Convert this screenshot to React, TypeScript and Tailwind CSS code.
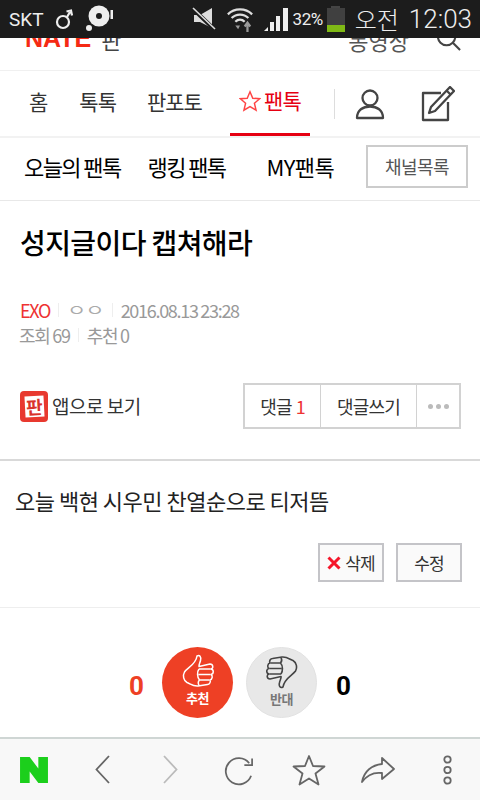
const KR = "font-['Noto_Sans_CJK_KR','Noto_Sans',sans-serif]";

const ThumbPath = () => (
  <>
    <path d="M15 1.5 C17.5 0 19.5 2 18.5 6 C18 8.5 16.5 10.5 17 12 L28 9.5 C31.5 9.5 31.5 14 29 14.5 C32 15 32 19.5 29 20 C31 21 30.5 25 28 25.5 C29 27.5 27.5 30 25.5 30 L16 31.5 C11 32 8 29 5 28 C1.5 26 0.5 21 2.5 17.5 C5 13.5 14 10 15 1.5 Z" />
    <path d="M17 14.5 L28.5 14.5 M16.5 20 L28.5 20 M17.5 25.5 L27.5 25.5 M17 14.5 C15 17 15 23 17.5 25.5 C16 27 16 29 17 31" />
  </>
);

const StatusBar = () => (
  <div className="h-[38px] shrink-0 bg-[#1c1c1c] flex items-center text-[#eeeeee] relative">
    <span className="ml-[9px] text-[19px] font-['Roboto',sans-serif] leading-none">SKT</span>
    {/* gender */}
    <svg width="20" height="22" viewBox="0 0 20 22" className="ml-[11px]" fill="none" stroke="#eee" strokeWidth="2.2">
      <circle cx="8" cy="14" r="6" />
      <path d="M12 9 L15 4 M11.5 3.5 L16 2.5 L17 7.5" />
    </svg>
    {/* disc */}
    <svg width="28" height="28" viewBox="0 0 28 28" className="ml-[11px]">
      <circle cx="13" cy="11" r="10.5" fill="#eee" />
      <circle cx="13" cy="11" r="3" fill="#1c1c1c" />
      <circle cx="3" cy="23" r="3" fill="#eee" />
      <rect x="24.5" y="5" width="2.5" height="9" fill="#eee" />
    </svg>
    <div className="ml-auto flex items-center">
      {/* mute */}
      <svg width="24" height="24" viewBox="0 0 24 24" className="mr-[10px]">
        <path d="M2 8 H8 L20 1 V21 L8 15 H2 Z" fill="#ddd" />
        <path d="M1 2 L22 22" stroke="#1c1c1c" strokeWidth="4" />
        <path d="M1 1 L23 22" stroke="#ddd" strokeWidth="1.6" />
      </svg>
      {/* wifi */}
      <svg width="28" height="28" viewBox="0 0 30 28" className="mr-[10px]" fill="none" stroke="#ddd" strokeWidth="2.4">
        <path d="M2 9 C9 2 21 2 28 9" />
        <path d="M6 13 C11 8 19 8 24 13" />
        <path d="M10 17 C13 14 17 14 20 17" />
        <path d="M10 21 L13 25 L15 21 Z" fill="#999" stroke="none" />
        <path d="M20 22 L23 18 L26 22 M23 19 V28" stroke="#999" />
      </svg>
      {/* signal */}
      <svg width="25" height="25" viewBox="0 0 25 25" className="mr-[4px]" fill="#eee">
        <path d="M0 24 L4 20 V24 Z" />
        <rect x="6" y="15" width="4" height="9" />
        <rect x="12" y="9" width="4" height="15" />
        <rect x="19" y="1" width="5" height="23" />
      </svg>
      <span className="text-[17px] font-['Roboto',sans-serif] leading-none tracking-[-0.5px] mr-[4px]">32%</span>
      {/* battery */}
      <div className="w-[18px] h-[26px] mr-[10px] flex flex-col items-center">
        <div className="w-[9px] h-[2px] bg-[#444]" />
        <div className="w-[18px] h-[24px] bg-[#404040] flex flex-col justify-end">
          <div className="h-[7px] bg-[#7fb915]" />
        </div>
      </div>
      <span className={`${KR} text-[24px] leading-none font-light mr-[10px]`}>오전</span>
      <span className="text-[26px] font-['Roboto',sans-serif] font-light leading-none mr-[8px]">12:03</span>
    </div>
  </div>
);

const ClippedHeader = () => (
  <div className="h-[32px] shrink-0 overflow-hidden border-b border-[#f0f0f0] box-content">
    <div className="flex items-start h-[32px] pl-[25px] pr-[19px]">
      <span className="-mt-[12px] text-[#f52a14] font-['Liberation_Sans',sans-serif] font-bold text-[25px] leading-none">NATE</span>
      <span className={`${KR} -mt-[10px] ml-[10px] text-[#444] text-[22px] leading-none`}>판</span>
      <span className={`${KR} -mt-[9px] ml-auto mr-[27px] text-[#555] text-[22px] leading-none`}>동영상</span>
      <svg width="25" height="25" viewBox="0 0 26 26" fill="none" stroke="#444" strokeWidth="2.2" className="-mt-[12px]">
        <circle cx="11" cy="11" r="9" />
        <path d="M17.5 17.5 L25 25" />
      </svg>
    </div>
  </div>
);

const TabBar = () => (
  <div className={`${KR} h-[65px] shrink-0 flex items-stretch border-b-2 border-[#f2f2f2] text-[#333] text-[21px] tracking-[-1px] box-content`}>
    <div className="ml-[29px] flex items-center pb-[3px]">홈</div>
    <div className="ml-[32px] flex items-center pb-[3px]">톡톡</div>
    <div className="ml-[31px] flex items-center pb-[3px]">판포토</div>
    <div className="ml-[28px] w-[80px] flex items-center justify-center gap-[3px] pb-[3px] border-b-[3px] border-[#e60012] text-[#e60012] relative">
      <svg width="22" height="22" viewBox="0 0 24 24" fill="none" stroke="#f44" strokeWidth="1.6">
        <path d="M12 2 L15 9 L22.5 9.5 L16.8 14.5 L18.6 22 L12 18 L5.4 22 L7.2 14.5 L1.5 9.5 L9 9 Z" />
      </svg>
      <span>팬톡</span>
    </div>
    <div className="ml-[24px] w-px h-[30px] self-center bg-[#ddd]" />
    <div className="ml-[20px] flex items-center">
      <svg width="30" height="32" viewBox="0 0 30 32" fill="none" stroke="#444" strokeWidth="2.3">
        <circle cx="15" cy="10" r="7.5" />
        <path d="M2 30 C2 22 8 18.5 15 18.5 C22 18.5 28 22 28 30 Z" strokeLinejoin="round" />
      </svg>
    </div>
    <div className="ml-[36px] flex items-center">
      <svg width="34" height="36" viewBox="0 0 34 36" fill="none" stroke="#444" strokeWidth="2.3" strokeLinejoin="round">
        <path d="M20 7 H2 V34 H27 V16" />
        <path d="M29 1 L33 5 L14 25 L8 27 L10 21 Z" />
        <path d="M25.5 4.5 L29.5 8.5" />
      </svg>
    </div>
  </div>
);

const SubNav = () => (
  <div className={`${KR} h-[57px] shrink-0 flex items-center pb-[5px] border-b border-[#e8e8e8] text-black text-[22px] tracking-[-1.6px] box-content`}>
    <span className="ml-[24px]">오늘의 팬톡</span>
    <span className="ml-[27px]">랭킹 팬톡</span>
    <span className="ml-[41px] tracking-[-0.6px]">MY팬톡</span>
    <span className="ml-[32px] w-[102px] h-[43px] border-2 border-[#cccccc] flex items-center justify-center text-[#555] text-[18px] tracking-[-0.5px]">채널목록</span>
  </div>
);

const ArticleHead = () => (
  <div className={`${KR} h-[260px] shrink-0 px-[20px] border-b-2 border-[#d9d9d9]`}>
    <h1 className="mt-[23px] text-[28px] leading-[36px] font-medium text-black tracking-[-0.6px]">성지글이다 캡쳐해라</h1>
    <div className="mt-[38px] flex items-center h-[24px] text-[18px] tracking-[-1.3px] text-[#999]">
      <span className="text-[#ee3333]">EXO</span>
      <span className="mx-[8px] h-[14px] w-px bg-[#eee]" />
      <span className="text-[21px] tracking-[-1px] text-[#aaa] scale-y-75">ㅇㅇ</span>
      <span className="mx-[8px] h-[14px] w-px bg-[#eee]" />
      <span>2016.08.13 23:28</span>
    </div>
    <div className="mt-[1px] flex items-center h-[24px] text-[18px] tracking-[-1.3px] text-[#999]">
      <span className="-ml-[1px]">조회 69</span>
      <span className="mx-[8px] h-[14px] w-px bg-[#eee]" />
      <span>추천 0</span>
    </div>
    <div className="mt-[36px] flex items-center">
      <div className="w-[28px] h-[31px] rounded-[4px] bg-[#e8392f] flex items-center justify-center">
        <span className="w-[19px] h-[21px] bg-white text-[#d9332a] text-[18px] font-bold leading-[21px] tracking-normal text-center -rotate-3">판</span>
      </div>
      <span className="ml-[4px] text-[19px] text-[#333] tracking-[-0.5px]">앱으로 보기</span>
      <div className="ml-auto mr-[-1px] flex h-[46px] w-[218px] border-2 border-[#d2d2d2] text-[18px] text-[#333] tracking-[-0.8px]">
        <div className="w-[76px] flex items-center justify-center gap-[4px] border-r border-[#d2d2d2]">
          <span>댓글</span>
          <span className="text-[#ee3333]">1</span>
        </div>
        <div className="w-[96px] flex items-center justify-center border-r border-[#d2d2d2]">댓글쓰기</div>
        <div className="flex-1 flex items-center justify-center gap-[3px]">
          <span className="w-[5px] h-[5px] rounded-full bg-[#bbb]" />
          <span className="w-[5px] h-[5px] rounded-full bg-[#bbb]" />
          <span className="w-[5px] h-[5px] rounded-full bg-[#bbb]" />
        </div>
      </div>
    </div>
  </div>
);

const Body = () => (
  <div className={`${KR} h-[147px] shrink-0 border-b border-[#eeeeee]`}>
    <p className="ml-[15px] mt-[23px] text-[22px] leading-[32px] text-[#222] tracking-[-0.5px]">오늘 백현 시우민 찬열순으로 티저뜸</p>
    <div className="mt-[27px] flex justify-end gap-[12px] pr-[18px]">
      <div className="w-[66px] h-[39px] border-2 border-[#c4c4c8] bg-[#fafafa] flex items-center justify-center gap-[4px] text-[17px] tracking-[-0.8px] text-[#333]">
        <svg width="14" height="14" viewBox="0 0 14 14" stroke="#f5162a" strokeWidth="3">
          <path d="M1.5 1.5 L12.5 12.5 M12.5 1.5 L1.5 12.5" />
        </svg>
        <span>삭제</span>
      </div>
      <div className="w-[66px] h-[39px] border-2 border-[#c4c4c8] bg-[#fafafa] flex items-center justify-center text-[17px] tracking-[-0.8px] text-[#333]">수정</div>
    </div>
  </div>
);

const Votes = () => (
  <div className={`${KR} flex-1 flex items-start justify-center`}>
    <div className="mt-[39px] flex items-center">
      <span className="pt-[7px] text-[26px] font-bold text-[#ee4025] font-['Roboto',sans-serif] w-[15px] leading-none">0</span>
      <div className="ml-[18px] w-[71px] h-[71px] rounded-full bg-[#ee4025] flex flex-col items-center pt-[6px]">
        <svg width="32" height="36" viewBox="0 0 32 33" fill="none" stroke="#fff" strokeWidth="1.5" strokeLinejoin="round">
          <ThumbPath />
        </svg>
        <span className="text-white font-bold text-[13px] leading-[16px] mt-[1px] tracking-[-0.5px]">추천</span>
      </div>
      <div className="ml-[13px] w-[71px] h-[71px] rounded-full bg-[#e8e8e8] border border-[#e2e2e2] flex flex-col items-center pt-[6px]">
        <svg width="32" height="36" viewBox="0 0 32 33" fill="none" stroke="#444" strokeWidth="1.6" strokeLinejoin="round" className="-scale-100">
          <ThumbPath />
        </svg>
        <span className="text-[#777] font-bold text-[13px] leading-[16px] mt-[1px] tracking-[-0.5px]">반대</span>
      </div>
      <span className="pt-[7px] ml-[19px] text-[26px] font-bold text-black font-['Roboto',sans-serif] w-[15px] leading-none">0</span>
    </div>
  </div>
);

const BottomBar = () => (
  <div className="h-[63px] shrink-0 bg-[#f8f8f8] border-t-2 border-[#cfd6d4] flex items-center pl-[20px]">
    <svg width="28" height="26" viewBox="0 0 29 27">
      <path d="M0 0 H10 L19 12 V0 H29 V27 H19 L10 15 V27 H0 Z" fill="#1ccf1c" />
    </svg>
    <svg width="15" height="29" viewBox="0 0 15 29" fill="none" stroke="#666" strokeWidth="1.8" className="ml-[47px]">
      <path d="M14 1 L1.5 14.5 L14 28" />
    </svg>
    <svg width="15" height="29" viewBox="0 0 15 29" fill="none" stroke="#bbb" strokeWidth="1.8" className="ml-[53px]">
      <path d="M1 1 L13.5 14.5 L1 28" />
    </svg>
    <svg width="31" height="32" viewBox="0 0 32 32" fill="none" stroke="#666" strokeWidth="1.8" className="ml-[46px]">
      <path d="M26 9 A13.5 13.5 0 1 0 28 22" />
      <path d="M29 4 V11 H21" />
    </svg>
    <svg width="34" height="32" viewBox="0 0 34 32" fill="none" stroke="#666" strokeWidth="1.8" strokeLinejoin="round" className="ml-[37px]">
      <path d="M17 2 L21 12 L32.5 12.5 L23.5 19.5 L26.5 30.5 L17 24.5 L7.5 30.5 L10.5 19.5 L1.5 12.5 L13 12 Z" />
    </svg>
    <svg width="34" height="26" viewBox="0 0 34 26" fill="none" stroke="#666" strokeWidth="1.8" strokeLinejoin="round" className="ml-[35px]">
      <path d="M21 1 L33 12 L21 22 V16 C13 15 6 18 1 25 C3 14 11 8 21 7 Z" />
    </svg>
    <svg width="9" height="30" viewBox="0 0 9 30" fill="none" stroke="#666" strokeWidth="1.8" className="ml-[48px]">
      <circle cx="4.5" cy="4.5" r="3.2" />
      <circle cx="4.5" cy="15" r="3.2" />
      <circle cx="4.5" cy="25.5" r="3.2" />
    </svg>
  </div>
);

const App = () => {
  return (
    <div className="w-[480px] h-[800px] bg-white flex flex-col overflow-hidden">
      <StatusBar />
      <ClippedHeader />
      <TabBar />
      <SubNav />
      <ArticleHead />
      <Body />
      <Votes />
      <BottomBar />
    </div>
  );
};

export default App;
